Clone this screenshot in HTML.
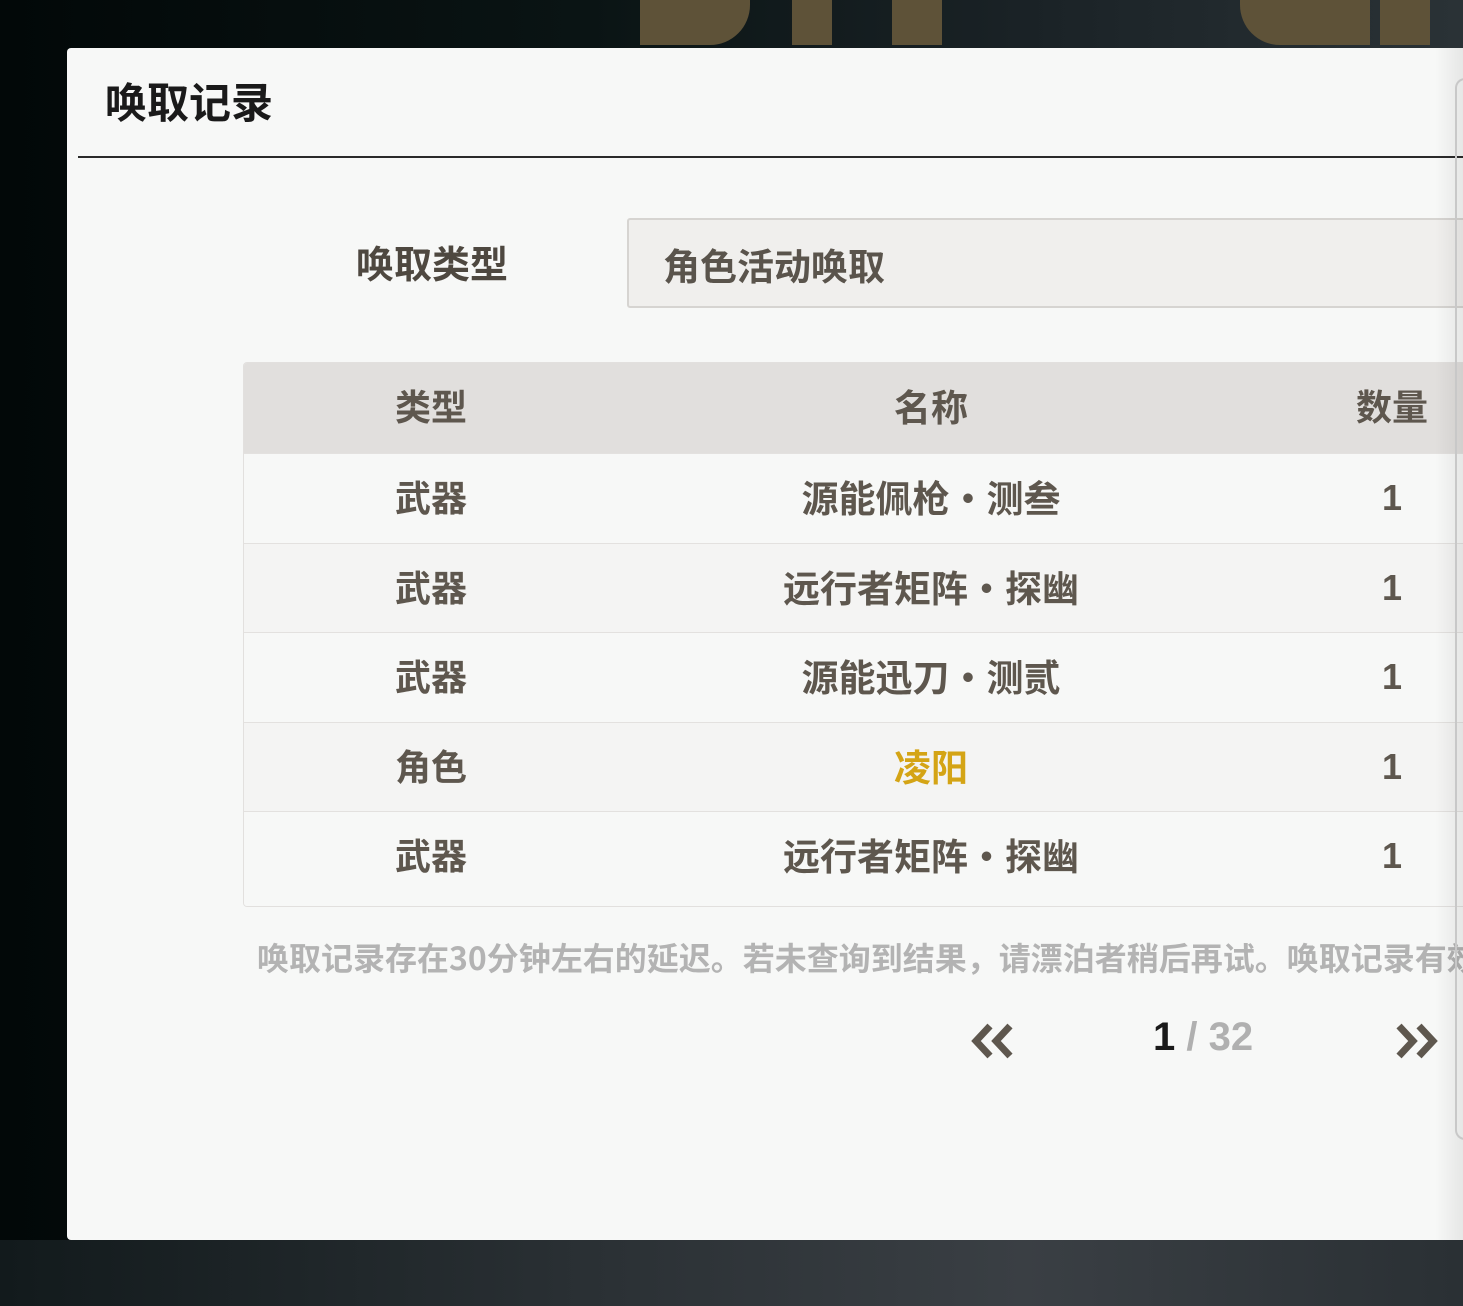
<!DOCTYPE html>
<html><head><meta charset="utf-8"><style>
*{margin:0;padding:0;box-sizing:border-box}
body{width:1463px;height:1306px;overflow:hidden;position:relative;background:#0b1416;font-family:"Noto Sans CJK SC","Liberation Sans",sans-serif;}
.bg{position:absolute;inset:0;background:linear-gradient(90deg,#020808 0%,#0a1414 40%,#1a2226 70%,#2a3236 100%)}
.bb{position:absolute;left:0;top:1240px;width:1463px;height:66px;background:linear-gradient(90deg,#121a1c,#2a3034 40%,#3a3f44 70%,#2a3034)}
.gold{position:absolute;background:#5e5238}
.modal{position:absolute;left:67px;top:48px;width:1420px;height:1192px;background:#f7f8f7;border-radius:4px 0 0 4px}
.shadow{position:absolute;left:1435px;top:48px;width:28px;height:1192px;background:linear-gradient(90deg,rgba(0,0,0,0),rgba(0,0,0,0.07))}
.edge{position:absolute;left:1455px;top:78px;width:20px;height:1062px;border:2px solid #c8c8c8;border-right:none;border-radius:10px 0 0 10px}
.title{position:absolute;left:105px;top:72px;font-size:42px;line-height:58px;font-weight:bold;color:#1a1a1a}
.line{position:absolute;left:78px;top:156px;width:1385px;height:2px;background:#2a2a2a}
.lbl{position:absolute;left:356px;top:235px;font-size:38px;line-height:54px;font-weight:bold;color:#4e4840}
.inp{position:absolute;left:627px;top:218px;width:900px;height:90px;background:#f0efed;border:2px solid #d6d4d1;border-radius:3px}
.inp span{position:absolute;left:34px;top:17px;font-size:37px;line-height:54px;font-weight:bold;color:#5a544c}
.tbl{position:absolute;left:243px;top:362px;width:1240px;border:1px solid #e2e0de;border-radius:4px 0 0 4px;overflow:hidden}
.row{height:89.5px;position:relative;border-top:1px solid #e3e1df}
.row div{position:absolute;top:0;line-height:84px;font-size:36px;font-weight:bold;color:#5e574e;text-align:center;transform:translateX(-50%);white-space:nowrap}
.row .c2{font-size:37px}
.row .c3{font-family:"Liberation Sans",sans-serif;line-height:88px}
.hd .c3{font-family:"Noto Sans CJK SC",sans-serif;line-height:84px}
.hd{background:#e1dfdd;border-top:none;height:90px}
.c1{left:187px}.c2{left:687px}.c3{left:1148px}
.r1{background:#f7f8f7}.r2{background:#f4f4f3}
.note{position:absolute;left:257px;top:934px;font-size:32px;line-height:46px;font-weight:bold;color:#b3b3b3;white-space:nowrap}
.pg{position:absolute;left:1153px;top:1015px;font-size:40px;font-weight:bold;color:#b0b0b0;font-family:"Liberation Sans",sans-serif}
.pg b{color:#1a1a1a}
</style></head><body>
<div class="bg"></div>
<div class="gold" style="left:640px;top:0;width:110px;height:45px;border-radius:0 0 40px 0"></div>
<div class="gold" style="left:792px;top:0;width:40px;height:45px"></div>
<div class="gold" style="left:892px;top:0;width:50px;height:45px"></div>
<div class="gold" style="left:1240px;top:0;width:130px;height:45px;border-radius:0 0 0 40px"></div>
<div class="gold" style="left:1380px;top:0;width:50px;height:45px"></div>
<div class="bb"></div>
<div class="modal"></div>
<div class="title">唤取记录</div>
<div class="line"></div>
<div class="lbl">唤取类型</div>
<div class="inp"><span>角色活动唤取</span></div>
<div class="tbl">
<div class="row hd"><div class="c1">类型</div><div class="c2">名称</div><div class="c3">数量</div></div>
<div class="row r1"><div class="c1">武器</div><div class="c2">源能佩枪・测叁</div><div class="c3">1</div></div>
<div class="row r2"><div class="c1">武器</div><div class="c2">远行者矩阵・探幽</div><div class="c3">1</div></div>
<div class="row r1"><div class="c1">武器</div><div class="c2">源能迅刀・测贰</div><div class="c3">1</div></div>
<div class="row r2"><div class="c1">角色</div><div class="c2" style="color:#d4a415">凌阳</div><div class="c3">1</div></div>
<div class="row r1" style="height:95px"><div class="c1">武器</div><div class="c2">远行者矩阵・探幽</div><div class="c3">1</div></div>
</div>
<div class="note">唤取记录存在30分钟左右的延迟。若未查询到结果，请漂泊者稍后再试。唤取记录有效</div>
<svg style="position:absolute;left:968px;top:1022px" width="50" height="38" viewBox="0 0 50 38"><path d="M22 4 L8 19 L22 34 M42 4 L28 19 L42 34" fill="none" stroke="#5e574e" stroke-width="7"/></svg>
<div class="pg"><b>1</b> / 32</div>
<svg style="position:absolute;left:1393px;top:1022px" width="50" height="38" viewBox="0 0 50 38"><path d="M6 4 L20 19 L6 34 M26 4 L40 19 L26 34" fill="none" stroke="#5e574e" stroke-width="7"/></svg>
<div class="shadow"></div>
<div class="edge"></div>
</body></html>
